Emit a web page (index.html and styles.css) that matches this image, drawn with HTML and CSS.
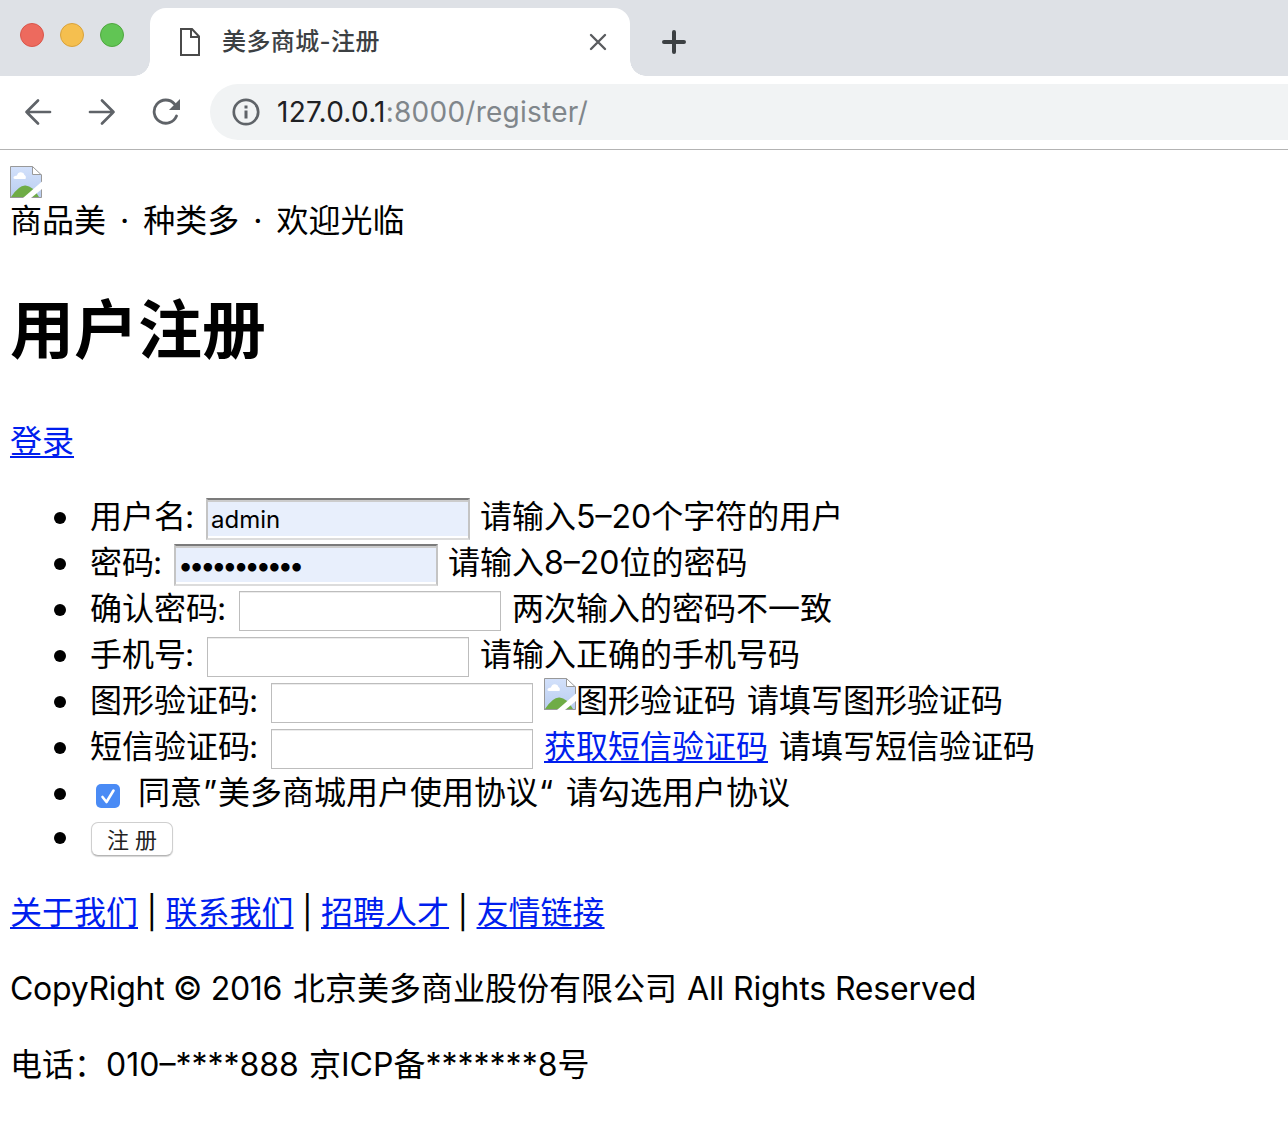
FILE: index.html
```html
<!DOCTYPE html>
<html lang="zh-CN">
<head>
<meta charset="utf-8">
<title>美多商城-注册</title>
<link rel="stylesheet" href="styles.css">
</head>
<body>
<svg width="0" height="0" class="defs">
  <defs>
    <linearGradient id="sky" x1="0" y1="0" x2="0" y2="1"><stop offset="0" stop-color="#d3e1fb"/><stop offset="1" stop-color="#b9cdf0"/></linearGradient>
    <symbol id="broken" viewBox="0 0 32 32">
      <path d="M.5.5H22L31.500 9V31.500H.5Z" fill="url(#sky)"/>
      <path d="M1 31Q9 19 15.500 19.500Q23 20 29 31Z" fill="#6fac46"/>
      <path d="M5 13Q3 13 3.500 11Q4.500 9.500 7 9.500Q8 6 11 6.300Q14 6.500 14.500 9Q16.500 10 15.500 13Z" fill="#fff"/>
      <path d="M22.500.5V9H31.500Z" fill="#fff"/>
      <path d="M22.500.5V8.500H31.500M.5 32V.5H22.500L31.500 9V31.500H0" fill="none" stroke="#999"/>
      <path d="M32 15.500V23L21 32H13Z" fill="#fff"/>
    </symbol>
  </defs>
</svg>
<header class="browser">
  <div class="tabstrip">
    <div class="lights"><i class="light red"></i><i class="light yellow"></i><i class="light green"></i></div>
    <div class="tab">
      <svg class="file" width="22" height="28" viewBox="0 0 22 28" fill="none" stroke="#4a4a4a" stroke-width="2"><path d="M2 1H13L20 8.500V27H2ZM12 1V9H20"/></svg>
      <span class="tab-title">美多商城-注册</span>
      <svg class="close" width="18" height="18" viewBox="0 0 18 18" stroke="#5a5c5f" stroke-width="2.400" stroke-linecap="round"><path d="M2 2L16 16M16 2L2 16"/></svg>
    </div>
    <svg class="plus" width="24" height="24" viewBox="0 0 24 24" stroke="#3c4043" stroke-width="4" stroke-linecap="round"><path d="M12 2V22M2 12H22"/></svg>
  </div>
  <div class="toolbar">
    <svg class="nav" width="28" height="28" viewBox="0 0 28 28" fill="none" stroke="#5f6368" stroke-width="2.700" stroke-linecap="round" stroke-linejoin="round"><path d="M26 14H2.500M14 2.500L2.500 14L14 25.500"/></svg>
    <svg class="nav" width="28" height="28" viewBox="0 0 28 28" fill="none" stroke="#5f6368" stroke-width="2.700" stroke-linecap="round" stroke-linejoin="round"><path d="M2 14H25.500M14 2.500L25.500 14L14 25.500"/></svg>
    <svg class="reload" width="28" height="28" viewBox="0 0 28 28" fill="none"><path d="M24.500 18A11.600 11.600 0 1 1 22.500 6" stroke="#5f6368" stroke-width="2.800" stroke-linecap="round"/><path d="M28 1V12H17Z" fill="#5f6368"/></svg>
    <div class="omnibox">
      <svg width="28" height="28" viewBox="0 0 28 28" fill="none"><circle cx="14" cy="14" r="12.200" stroke="#5f6368" stroke-width="2.700"/><path d="M14 12.500V20.500M14 7.500V10.500" stroke="#5f6368" stroke-width="3"/></svg>
      <span class="url"><b>127.0.0.1</b>:8000/register/</span>
    </div>
  </div>
</header>
<main class="page">
  <svg class="logo" width="32" height="32"><use href="#broken"/></svg>
  <p class="slogan">商品美 · 种类多 · 欢迎光临</p>
  <h1>用户注册</h1>
  <a class="login" href="#">登录</a>
  <ul class="form">
    <li>用户名<span class="colon">:</span><input class="filled" type="text" value="admin"><span class="hint">请输入<span class="num">5–20</span>个字符的用户</span></li>
    <li>密码<span class="colon">:</span><input class="filled dots" type="text" value="•••••••••••"><span class="hint">请输入<span class="num">8–20</span>位的密码</span></li>
    <li>确认密码<span class="colon">:</span><input type="text"><span class="hint">两次输入的密码不一致</span></li>
    <li>手机号<span class="colon">:</span><input type="text"><span class="hint">请输入正确的手机号码</span></li>
    <li>图形验证码<span class="colon">:</span><input type="text"><svg class="captcha" width="32" height="32"><use href="#broken"/></svg>图形验证码<span class="hint">请填写图形验证码</span></li>
    <li>短信验证码<span class="colon">:</span><input type="text"><a class="sms" href="#">获取短信验证码</a><span class="hint">请填写短信验证码</span></li>
    <li><svg class="check" width="24" height="24" viewBox="0 0 24 24"><rect width="24" height="24" rx="5" fill="#4a8bf5"/><path d="M6.500 13L10.500 18L17.500 6.500" fill="none" stroke="#fff" stroke-width="2.600" stroke-linecap="round" stroke-linejoin="round"/></svg>同意<span class="quote">”</span>美多商城用户使用协议<span class="quote">“</span><span class="agree">请勾选用户协议</span></li>
    <li class="submit"><button type="button">注 册</button></li>
  </ul>
  <nav class="links"><a href="#">关于我们</a><span>|</span><a href="#">联系我们</a><span>|</span><a href="#">招聘人才</a><span>|</span><a href="#">友情链接</a></nav>
  <p class="foot"><span class="c1">CopyRight © 2016</span><span>北京美多商业股份有限公司</span><span class="c2">All Rights Reserved</span></p>
  <p class="foot"><span class="tel">电话：</span><span class="t1">010–****888</span><span>京<span class="t2">ICP</span>备<span class="t3">*******8</span>号</span></p>
</main>
</body>
</html>
```

FILE: styles.css
```css
* { box-sizing: border-box; }
body {
  margin: 0;
  background: #fff;
  color: #000;
  font: 32px/46px Inter, "Noto Sans CJK SC", sans-serif;
  white-space: nowrap;
  overflow: hidden;
}
p, h1, ul { margin: 0; padding: 0; }
svg { flex: none; display: block; }
.defs { position: absolute; }
a { color: #001eee; text-decoration: underline; text-decoration-thickness: 2px; text-underline-offset: 3px; text-decoration-skip-ink: none; }

.browser { height: 150px; border-bottom: 1px solid #b3b3b3; }
.tabstrip { height: 76px; background: #dee1e6; display: flex; }
.lights { display: flex; gap: 16px; padding: 23px 0 0 20px; width: 150px; }
.light { width: 24px; height: 24px; border-radius: 50%; border: 1px solid; }
.red { background: #ed6a5e; border-color: #d9564b; }
.yellow { background: #f5bf4f; border-color: #d9a23b; }
.green { background: #61c554; border-color: #4fa73f; }
.tab {
  position: relative;
  width: 480px;
  height: 68px;
  margin-top: 8px;
  padding: 0 23px 0 29px;
  background: #fff;
  border-radius: 16px 16px 0 0;
  display: flex;
  align-items: center;
}
.tab::before, .tab::after { content: ""; position: absolute; bottom: 0; width: 16px; height: 16px; }
.tab::before { left: -16px; background: radial-gradient(circle at 0 0, #dee1e6 15.500px, #fff 16px); }
.tab::after { right: -16px; background: radial-gradient(circle at 100% 0, #dee1e6 15.500px, #fff 16px); }
.tab-title { margin-left: 21px; font-size: 24px; font-weight: 450; letter-spacing: 0.400px; color: #3c4043; line-height: 66px; }
.close { margin-left: auto; }
.plus { margin: 30px 0 0 32px; }
.toolbar { height: 72px; display: flex; align-items: center; padding-left: 24px; }
.nav { margin-right: 36px; }
.reload { margin-right: 30px; }
.omnibox {
  flex: 1;
  height: 56px;
  background: #f1f3f4;
  border-radius: 28px 0 0 28px;
  padding-left: 22px;
  display: flex;
  align-items: center;
}
.url { margin-left: 17px; font-size: 28px; color: #80868b; letter-spacing: 0.250px; }
.url b { color: #202124; font-weight: 400; }

.page { padding: 16px 10px 0; }
.slogan { line-height: 46px; word-spacing: 5px; }
h1 { margin-top: 42px; font-size: 64px; line-height: 88px; font-weight: 700; }
.login { display: block; width: 64px; margin-top: 45px; }
.form { list-style: none; margin-top: 29px; }
.form li { display: flex; align-items: center; height: 46px; padding-left: 80px; }
.form li::before { content: ""; width: 12px; height: 12px; margin: 2px 24px 0 -36px; border-radius: 50%; background: #000; flex: none; }
.colon { width: 20px; text-indent: -1px; }
.form input {
  width: 262px;
  height: 40px;
  margin: 4px 1px 0;
  padding: 0 4px;
  border: 1px solid #bdbdbd;
  box-shadow: inset 0 1px #ececec;
  background: #fff;
  font: 24px Inter, sans-serif;
}
.form input.filled {
  width: 264px;
  height: 42px;
  margin: 4px 0 0;
  padding: 0 3px;
  border: 2px solid #c4c4c4;
  border-top-color: #7b7b7b;
  border-bottom-color: #dcdcdc;
  box-shadow: inset 0 2px #cccccc, inset 0 -2px #fff;
  background: #e8effc;
}
.form input.dots { padding-left: 2px; font-size: 27px; letter-spacing: -4.100px; }
.hint { margin-left: 10px; }
.captcha { margin: -14px 0 0 10px; }
.captcha + .hint, .sms + .hint { margin-left: 11px; }
.sms { margin-left: 10px; }
.check { margin: 5px 18px 0 6px; }
.quote { width: 16px; text-align: center; }
.agree { margin-left: 12px; }
.form .submit { height: 44px; }
.form .submit::before { margin-top: 0; }
.submit button {
  width: 82px;
  height: 34px;
  margin: 2px 0 0 1px;
  padding: 2px 0 0;
  border: 1px solid #cfcfcf;
  border-bottom-color: #b5b5b5;
  border-radius: 7px;
  box-shadow: 0 1px 1px #d5d5d5;
  background: #fff;
  color: #222;
  font: 22px/30px Inter, "Noto Sans CJK SC", sans-serif;
}
.links { display: flex; margin-top: 30px; }
.links span { width: 27.500px; text-align: center; }
.foot { display: flex; margin-top: 30px; }
.c1 { width: 283px; letter-spacing: -0.300px; }
.c2 { margin-left: 10px; letter-spacing: -0.150px; }
.tel { width: 96px; }
.t1 { width: 203px; }
```
